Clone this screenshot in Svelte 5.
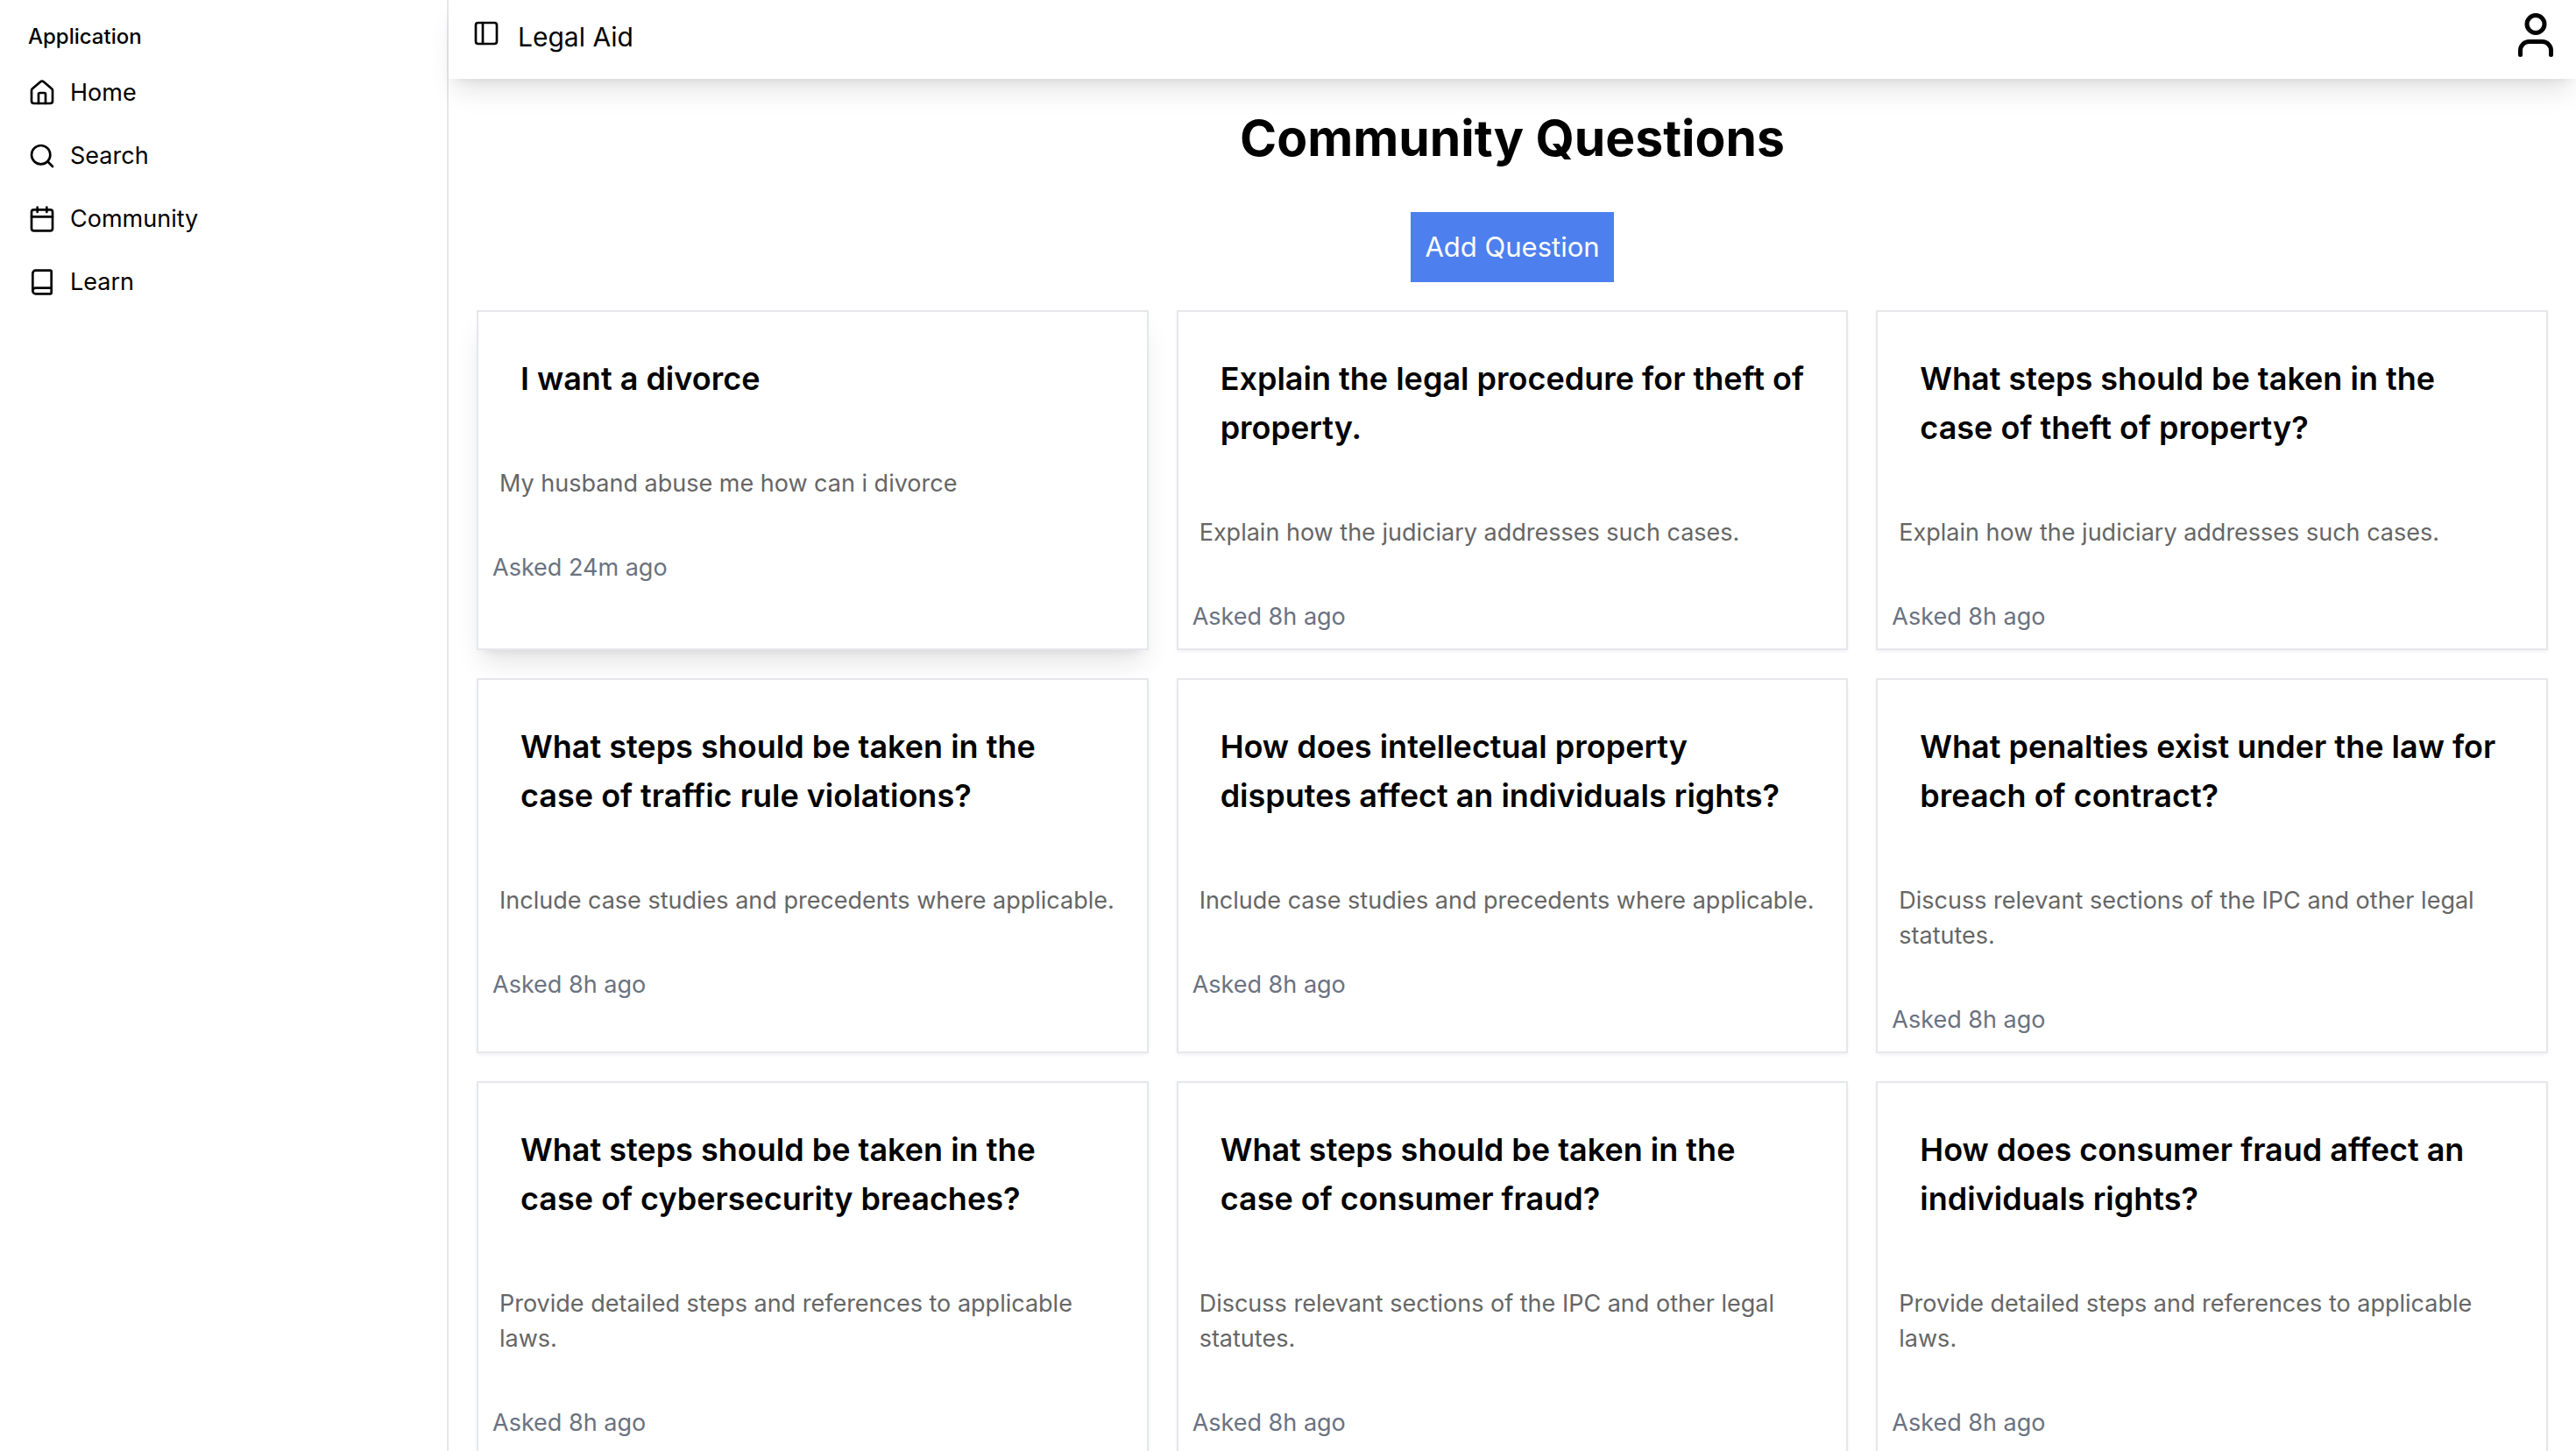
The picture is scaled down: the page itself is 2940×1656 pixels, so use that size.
<script>
  const nav = [
    { label: 'Home', icon: 'home' },
    { label: 'Search', icon: 'search' },
    { label: 'Community', icon: 'calendar' },
    { label: 'Learn', icon: 'book' },
  ];

  const questions = [
    { title: 'I want a divorce', body: 'My husband abuse me how can i divorce', asked: '24m', raised: true },
    { title: 'Explain the legal procedure for theft of property.', body: 'Explain how the judiciary addresses such cases.', asked: '8h' },
    { title: 'What steps should be taken in the case of theft of property?', body: 'Explain how the judiciary addresses such cases.', asked: '8h' },
    { title: 'What steps should be taken in the case of traffic rule violations?', body: 'Include case studies and precedents where applicable.', asked: '8h' },
    { title: 'How does intellectual property disputes affect an individuals rights?', body: 'Include case studies and precedents where applicable.', asked: '8h' },
    { title: 'What penalties exist under the law for breach of contract?', body: 'Discuss relevant sections of the IPC and other legal statutes.', asked: '8h' },
    { title: 'What steps should be taken in the case of cybersecurity breaches?', body: 'Provide detailed steps and references to applicable laws.', asked: '8h' },
    { title: 'What steps should be taken in the case of consumer fraud?', body: 'Discuss relevant sections of the IPC and other legal statutes.', asked: '8h' },
    { title: 'How does consumer fraud affect an individuals rights?', body: 'Provide detailed steps and references to applicable laws.', asked: '8h' },
  ];
</script>

<div class="app">
  <aside class="sidebar">
    <h2 class="group-label">Application</h2>
    <nav aria-label="Application">
      {#each nav as item}
        <a class="nav-item" href="#{item.icon}">
          <svg class="icon" viewBox="0 0 24 24" aria-hidden="true">
            {#if item.icon === 'home'}
              <path d="M15 21v-8a1 1 0 0 0-1-1h-4a1 1 0 0 0-1 1v8" />
              <path d="M3 10a2 2 0 0 1 .709-1.528l7-5.999a2 2 0 0 1 2.582 0l7 5.999A2 2 0 0 1 21 10v9a2 2 0 0 1-2 2H5a2 2 0 0 1-2-2z" />
            {:else if item.icon === 'search'}
              <circle cx="11" cy="11" r="8" />
              <path d="m21 21-4.3-4.3" />
            {:else if item.icon === 'calendar'}
              <path d="M8 2v4M16 2v4M3 10h18" />
              <rect width="18" height="18" x="3" y="4" rx="2" />
            {:else}
              <path d="M4 19.5v-15A2.5 2.5 0 0 1 6.500 2H19a1 1 0 0 1 1 1v18a1 1 0 0 1-1 1H6.500a1 1 0 0 1 0-5H20" />
            {/if}
          </svg>
          <span>{item.label}</span>
        </a>
      {/each}
    </nav>
  </aside>

  <div class="main">
    <header class="topbar">
      <div class="brand">
        <button class="icon-button" aria-label="Toggle sidebar">
          <svg class="icon" viewBox="0 0 24 24" aria-hidden="true">
            <rect width="18" height="18" x="3" y="3" rx="2" />
            <path d="M9 3v18" />
          </svg>
        </button>
        <span class="brand-name">Legal Aid</span>
      </div>
      <button class="icon-button" aria-label="Account">
        <svg class="icon large" viewBox="0 0 24 24" aria-hidden="true">
          <path d="M19 21v-2a4 4 0 0 0-4-4H9a4 4 0 0 0-4 4v2" />
          <circle cx="12" cy="7" r="4" />
        </svg>
      </button>
    </header>

    <main>
      <h1>Community Questions</h1>
      <button class="add">Add Question</button>
      <div class="grid">
        {#each questions as q}
          <article class="card" class:raised={q.raised}>
            <h3>{q.title}</h3>
            <p class="body">{q.body}</p>
            <p class="asked">Asked {q.asked} ago</p>
          </article>
        {/each}
      </div>
    </main>
  </div>
</div>

<style>
  :global(body) {
    margin: 0;
    background: #fff;
  }

  .app {
    display: flex;
    height: 100vh;
    overflow: hidden;
    font-family: Inter, 'Liberation Sans', sans-serif;
    font-size: 27px;
    line-height: 40px;
    color: #000;
  }

  h1, h2, h3, p {
    margin: 0;
  }

  button {
    border: 0;
    font: inherit;
    cursor: pointer;
  }

  .icon {
    display: block;
    flex: none;
    width: 32px;
    height: 32px;
    fill: none;
    stroke: currentColor;
    stroke-width: 2;
    stroke-linecap: round;
    stroke-linejoin: round;
  }

  .icon.large {
    width: 60px;
    height: 60px;
  }

  .sidebar {
    box-sizing: border-box;
    flex: none;
    width: 512px;
    padding: 10px 16px;
    border-right: 2px solid #e5e7eb;
  }

  .group-label {
    padding: 0 16px;
    font-size: 24px;
    font-weight: 500;
    line-height: 64px;
  }

  nav {
    display: flex;
    flex-direction: column;
    gap: 8px;
  }

  .nav-item {
    display: flex;
    align-items: center;
    gap: 16px;
    height: 64px;
    padding: 0 16px;
    color: inherit;
    text-decoration: none;
  }

  .main {
    flex: 1;
    min-width: 0;
  }

  .topbar {
    display: flex;
    align-items: flex-start;
    justify-content: space-between;
    box-sizing: border-box;
    height: 90px;
    padding: 10px 16px;
    box-shadow: 0 20px 30px -6px rgb(0 0 0 / 0.1), 0 8px 12px -8px rgb(0 0 0 / 0.1);
  }

  .icon-button {
    padding: 0;
    background: none;
    color: inherit;
  }

  .brand {
    display: flex;
    align-items: flex-start;
    gap: 20px;
    padding: 12px 11px;
  }

  .brand-name {
    font-size: 30px;
  }

  main {
    display: flex;
    flex-direction: column;
    align-items: center;
    padding: 32px;
  }

  h1 {
    font-size: 57px;
    font-weight: 700;
    line-height: 72px;
  }

  .add {
    margin: 48px 0 32px;
    padding: 16px;
    background: #4d80ee;
    color: #fff;
    font-size: 31px;
    line-height: 48px;
  }

  .grid {
    display: grid;
    grid-template-columns: repeat(3, minmax(0, 1fr));
    gap: 32px;
    width: 100%;
  }

  .card {
    border: 2px solid #e5e7eb;
    background: #fff;
    box-shadow: 0 2px 4px rgb(0 0 0 / 0.05);
  }

  .card.raised {
    box-shadow: 0 20px 30px -6px rgb(0 0 0 / 0.1), 0 8px 12px -8px rgb(0 0 0 / 0.1);
  }

  h3 {
    padding: 48px;
    font-size: 36px;
    font-weight: 600;
    line-height: 56px;
  }

  .body {
    padding: 24px;
    color: #666;
  }

  .asked {
    padding: 32px 16px 16px;
    color: #6b7280;
  }
</style>
